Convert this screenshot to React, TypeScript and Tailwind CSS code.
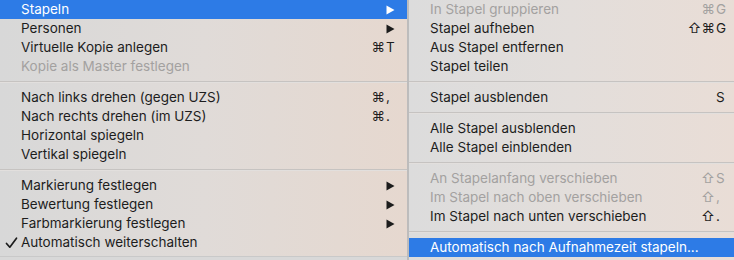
import React from "react";

type Row =
  | { sep: true }
  | {
      sep?: false;
      label: string;
      mods?: string;
      keyChar?: string;
      arrow?: boolean;
      disabled?: boolean;
      active?: boolean;
      check?: boolean;
    };

const leftRows: Row[] = [
  { label: "Stapeln", arrow: true, active: true },
  { label: "Personen", arrow: true },
  { label: "Virtuelle Kopie anlegen", mods: "⌘", keyChar: "T" },
  { label: "Kopie als Master festlegen", disabled: true },
  { sep: true },
  { label: "Nach links drehen (gegen UZS)", mods: "⌘", keyChar: "," },
  { label: "Nach rechts drehen (im UZS)", mods: "⌘", keyChar: "." },
  { label: "Horizontal spiegeln" },
  { label: "Vertikal spiegeln" },
  { sep: true },
  { label: "Markierung festlegen", arrow: true },
  { label: "Bewertung festlegen", arrow: true },
  { label: "Farbmarkierung festlegen", arrow: true },
  { label: "Automatisch weiterschalten", check: true },
];

const rightRows: Row[] = [
  { label: "In Stapel gruppieren", mods: "⌘", keyChar: "G", disabled: true },
  { label: "Stapel aufheben", mods: "⇧⌘", keyChar: "G" },
  { label: "Aus Stapel entfernen" },
  { label: "Stapel teilen" },
  { sep: true },
  { label: "Stapel ausblenden", keyChar: "S" },
  { sep: true },
  { label: "Alle Stapel ausblenden" },
  { label: "Alle Stapel einblenden" },
  { sep: true },
  { label: "An Stapelanfang verschieben", mods: "⇧", keyChar: "S", disabled: true },
  { label: "Im Stapel nach oben verschieben", mods: "⇧", keyChar: ",", disabled: true },
  { label: "Im Stapel nach unten verschieben", mods: "⇧", keyChar: "." },
  { sep: true },
  { label: "Automatisch nach Aufnahmezeit stapeln...", active: true },
];

function Arrow({ white }: { white?: boolean }) {
  return (
    <svg width="9" height="10" viewBox="0 0 9 10" className="shrink-0 mr-[2px]">
      <path d="M0.5 0.5 L8.5 5 L0.5 9.5 Z" fill={white ? "#ffffff" : "#1c1c1c"} />
    </svg>
  );
}

function Check() {
  return (
    <svg width="13" height="12" viewBox="0 0 13 12" className="absolute left-[5px] top-[4px]">
      <path d="M1.5 6.5 L4.8 10.2 L11.5 1.2" fill="none" stroke="#1c1c1c" strokeWidth="1.7" strokeLinecap="round" strokeLinejoin="round" />
    </svg>
  );
}

function MenuRow({ row, keyPad }: { row: Row; keyPad: string }) {
  if (row.sep) {
    return (
      <div className="h-[12px] flex items-center">
        <div className="w-full h-[2px] border-t border-[#c6c3c1] border-b border-b-[#e2dfdd]" />
      </div>
    );
  }
  const color = row.active ? "text-white" : row.disabled ? "text-[#a3a1a0]" : "text-[#1d1d1d]";
  return (
    <div
      className={`relative h-[19px] flex items-center pl-[21px] ${keyPad} ${color} ${
        row.active ? "bg-[#2d7be6]" : ""
      }`}
    >
      {row.check && <Check />}
      <span className="flex-1 whitespace-nowrap">{row.label}</span>
      {row.arrow && <Arrow white={row.active} />}
      {row.keyChar && (
        <span className="flex items-center">
          {row.mods && <span className="mr-[1px]">{row.mods}</span>}
          <span className="w-[11px]">{row.keyChar}</span>
        </span>
      )}
    </div>
  );
}

export default function App() {
  return (
    <div
      className="w-[734px] h-[260px] overflow-hidden flex bg-[#d8d8d8] text-[13.5px] leading-[19px]"
      style={{ fontFamily: "Inter, 'Liberation Sans', sans-serif" }}
    >
      {/* main menu */}
      <div className="w-[407px] h-[257px] flex flex-col bg-gradient-to-r from-[#d8d8d8] via-[#e0dbd8] to-[#e6d8cf] border-b border-[#c9c9c9]">
        {leftRows.map((r, i) => (
          <MenuRow key={i} row={r} keyPad="pr-[10px]" />
        ))}
      </div>
      <div className="w-[2px] h-full bg-[#bdbcbc]" />
      {/* submenu */}
      <div className="flex-1 h-[260px] flex flex-col bg-gradient-to-r from-[#dcdcdc] via-[#e3dedb] to-[#e9ddd6]">
        {rightRows.map((r, i) => (
          <MenuRow key={i} row={r} keyPad="pr-[7px]" />
        ))}
      </div>
    </div>
  );
}
